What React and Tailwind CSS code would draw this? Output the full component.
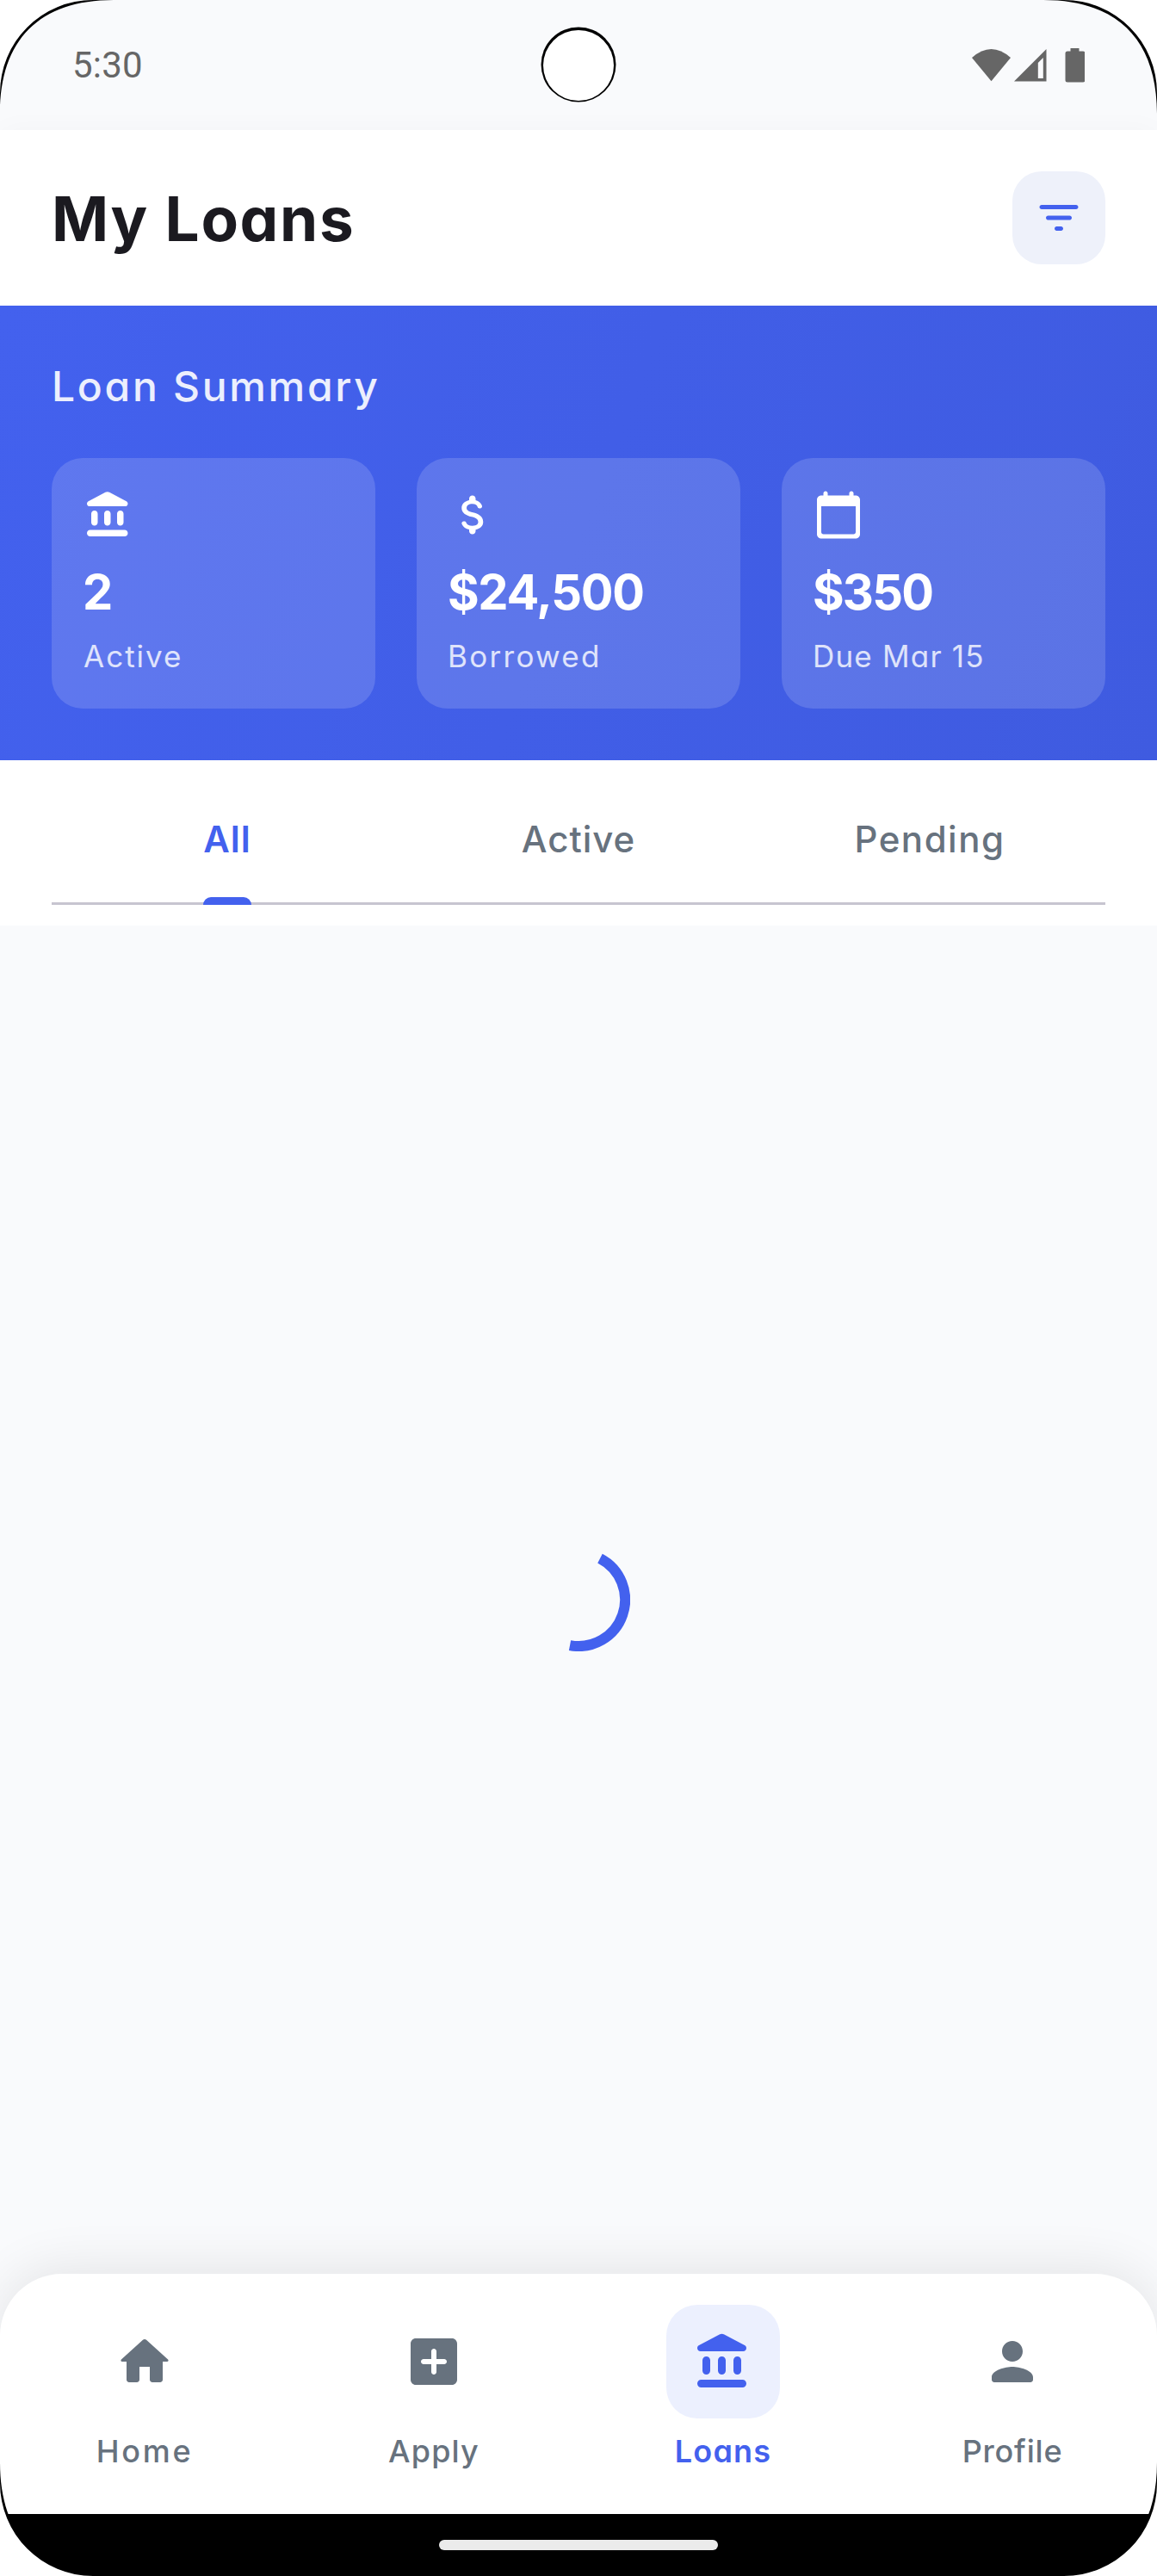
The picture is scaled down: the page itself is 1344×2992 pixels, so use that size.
import React from "react";

const PATHS = {
  bank: "M4 11.5v4c0 .83.67 1.5 1.5 1.5S7 16.33 7 15.5v-4c0-.83-.67-1.5-1.5-1.5S4 10.67 4 11.5zm6 0v4c0 .83.67 1.5 1.5 1.5s1.5-.67 1.5-1.5v-4c0-.83-.67-1.5-1.5-1.5s-1.5.67-1.5 1.5zM3.5 22h16c.83 0 1.5-.67 1.5-1.5s-.67-1.5-1.5-1.5h-16c-.83 0-1.5.67-1.5 1.5S2.67 22 3.5 22zM16 11.5v4c0 .83.67 1.5 1.5 1.5s1.5-.67 1.5-1.5v-4c0-.83-.67-1.5-1.5-1.5s-1.5.67-1.5 1.5zM10.57 1.49l-7.9 4.16c-.41.21-.67.64-.67 1.1C2 7.44 2.56 8 3.25 8h16.51C20.44 8 21 7.44 21 6.75c0-.46-.26-.89-.67-1.1l-7.9-4.16c-.58-.31-1.28-.31-1.86 0z",
  dollar: "M11.8 10.9c-2.27-.59-3-1.2-3-2.15 0-1.09 1.01-1.85 2.7-1.85 1.42 0 2.13.54 2.39 1.4.12.4.45.7.87.7h.3c.66 0 1.13-.65.9-1.27-.42-1.18-1.4-2.16-2.96-2.54V4.5c0-.83-.67-1.5-1.5-1.5S10 3.67 10 4.5v.66c-1.94.42-3.5 1.68-3.5 3.61 0 2.31 1.91 3.46 4.7 4.13 2.5.6 3 1.48 3 2.41 0 .69-.49 1.79-2.7 1.79-1.65 0-2.5-.59-2.83-1.43-.15-.39-.49-.67-.9-.67h-.28c-.67 0-1.14.68-.89 1.3.57 1.39 1.9 2.21 3.4 2.53v.67c0 .83.67 1.5 1.5 1.5s1.5-.67 1.5-1.5v-.65c1.95-.37 3.5-1.5 3.5-3.55 0-2.84-2.43-3.81-4.7-4.4z",
  calendar: "M20 3h-1V2c0-.55-.45-1-1-1s-1 .45-1 1v1H7V2c0-.55-.45-1-1-1s-1 .45-1 1v1H4c-1.1 0-2 .9-2 2v16c0 1.1.9 2 2 2h16c1.1 0 2-.9 2-2V5c0-1.1-.9-2-2-2zm-1 18H5c-.55 0-1-.45-1-1V8h16v12c0 .55-.45 1-1 1z",
  filter: "M11 18h2c.55 0 1-.45 1-1s-.45-1-1-1h-2c-.55 0-1 .45-1 1s.45 1 1 1zM3 7c0 .55.45 1 1 1h16c.55 0 1-.45 1-1s-.45-1-1-1H4c-.55 0-1 .45-1 1zm4 6h10c.55 0 1-.45 1-1s-.45-1-1-1H7c-.55 0-1 .45-1 1s.45 1 1 1z",
  home: "M10 19v-5h4v5c0 .55.45 1 1 1h3c.55 0 1-.45 1-1v-7h1.7c.46 0 .68-.57.33-.87L12.67 3.6c-.38-.34-.96-.34-1.34 0l-8.36 7.53c-.34.3-.13.87.33.87H5v7c0 .55.45 1 1 1h3c.55 0 1-.45 1-1z",
  add: "M19 3H5c-1.1 0-2 .9-2 2v14c0 1.1.9 2 2 2h14c1.1 0 2-.9 2-2V5c0-1.1-.9-2-2-2zm-3 10h-3v3c0 .55-.45 1-1 1s-1-.45-1-1v-3H8c-.55 0-1-.45-1-1s.45-1 1-1h3V8c0-.55.45-1 1-1s1 .45 1 1v3h3c.55 0 1 .45 1 1s-.45 1-1 1z",
  person: "M12 12c2.21 0 4-1.79 4-4s-1.79-4-4-4-4 1.79-4 4 1.79 4 4 4zm0 2c-2.67 0-8 1.34-8 4v1c0 .55.45 1 1 1h14c.55 0 1-.45 1-1v-1c0-2.66-5.33-4-8-4z",
};

function Icon({ name, className }) {
  return (
    <svg viewBox="0 0 24 24" fill="currentColor" className={className} aria-hidden="true">
      <path d={PATHS[name]} />
    </svg>
  );
}

/* Rounded display corner with its thin black bezel line. */
function Corner({ className }) {
  return (
    <svg viewBox="0 0 132 132" className={`pointer-events-none absolute z-20 size-[132px] ${className}`} aria-hidden="true">
      <path d="M0 0V132C0 46 46 0 132 0Z" fill="#000" />
      <path d="M0 0V108A108 108 0 0 1 108 0Z" fill="#fff" />
    </svg>
  );
}

function StatusBar() {
  return (
    <div className="relative flex h-[151px] shrink-0 items-center justify-between px-[84px] text-[#666666]">
      <span className="font-[Roboto] text-[42px] leading-none tracking-[0.2px]">5:30</span>
      <svg viewBox="0 0 132 40" className="h-10 w-[132px]" fill="currentColor" aria-hidden="true">
        <path d="M23.5 38.3L1 11Q23.5-9 46 11Z" />
        <path fillRule="evenodd" d="M50 38.5L87.5 1V38.5ZM77.8 35H83.8V11L77.8 17Z" />
        <path d="M115.5 0h10v3.5h4.500a2.500 2.500 0 0 1 2.500 2.500v31a2.500 2.500 0 0 1-2.500 2.500h-18a2.500 2.500 0 0 1-2.500-2.500v-31a2.500 2.500 0 0 1 2.500-2.500h3.500z" />
      </svg>
      <svg viewBox="0 0 90 90" className="absolute top-[30px] left-[627px] size-[90px]" aria-hidden="true">
        <circle cx="45" cy="45" r="43.5" fill="#000" />
        <circle cx="45" cy="46" r="41" fill="#fff" />
      </svg>
    </div>
  );
}

const STATS = [
  { icon: "bank", value: "2", label: "Active", valueCls: "", labelCls: "pl-px tracking-[2px]" },
  { icon: "dollar", value: "$24,500", label: "Borrowed", valueCls: "tracking-[-1.3px]", labelCls: "tracking-[2.3px]" },
  { icon: "calendar", value: "$350", label: "Due Mar 15", valueCls: "tracking-[-1.8px]", labelCls: "tracking-[1.2px]" },
];

const TABS = [
  { label: "All", cls: "font-semibold tracking-[1px] text-[#4361ee]", active: true },
  { label: "Active", cls: "font-medium tracking-[1px] text-[#67727e]" },
  { label: "Pending", cls: "font-medium tracking-[1.5px] text-[#67727e]" },
];

const NAV = [
  { icon: "home", label: "Home", cls: "font-medium tracking-[2.7px] text-[#67727e]" },
  { icon: "add", label: "Apply", cls: "font-medium tracking-[1.2px] text-[#67727e]" },
  { icon: "bank", label: "Loans", cls: "font-semibold tracking-[1.2px] text-[#4361ee]", active: true },
  { icon: "person", label: "Profile", cls: "font-medium tracking-[0.8px] text-[#67727e]" },
];

export default function App() {
  return (
    <div className="relative flex h-[2992px] w-[1344px] flex-col overflow-hidden bg-[#f9fafc] font-[Inter,sans-serif] [font-feature-settings:'cv11']">
      <StatusBar />

      <header className="flex h-[204px] shrink-0 items-center justify-between bg-white px-[60px] shadow-[0_6px_36px_rgba(0,0,0,0.04)]">
        <h1 className="pt-[2px] text-[71px] leading-none font-bold tracking-[1.7px] text-[#1b1a20]">My Loans</h1>
        <button className="flex size-[108px] items-center justify-center rounded-[34px] bg-[#eef1fa] text-[#4361ee]">
          <Icon name="filter" className="size-[60px]" />
        </button>
      </header>

      <section className="relative h-[528px] shrink-0 bg-[linear-gradient(111.45deg,#4361ee,#3f5be0)] px-[60px] pt-[60px] text-white">
        <h2 className="flex h-[69px] items-center pb-0.5 text-[48px] leading-none font-medium tracking-[2.7px] text-white/90">Loan Summary</h2>
        <div className="mt-12 grid grid-cols-3 gap-12">
          {STATS.map((s) => (
            <div key={s.label} className="flex h-[291px] flex-col rounded-[36px] bg-white/15 px-9 pt-9">
              <Icon name={s.icon} className="size-[60px]" />
              <div className={`mt-8 text-[56px] leading-none font-bold ${s.valueCls}`}>{s.value}</div>
              <div className={`mt-[29px] text-[35px] leading-none text-white/80 ${s.labelCls}`}>{s.label}</div>
            </div>
          ))}
        </div>
      </section>

      <nav className="relative h-[192px] shrink-0 bg-white px-[60px]">
        <div className="grid h-[168px] grid-cols-3 border-b-[3px] border-[#c7c5d0]">
          {TABS.map((t) => (
            <div key={t.label} className={`flex justify-center text-[42px] leading-none ${t.cls}`}>
              <div className="relative flex h-[168px] items-center pt-4">
                {t.label}
                {t.active && <span className="absolute inset-x-0 bottom-0 h-[9px] rounded-t-[9px] bg-[#4361ee]" />}
              </div>
            </div>
          ))}
        </div>
      </nav>

      <main className="flex flex-1 items-center justify-center">
        <svg viewBox="-60 -60 120 120" className="size-[120px]" fill="none" aria-label="Loading">
          <path d="M25-47.900A54 54 0 0 1-10 53.070" stroke="#4361ee" strokeWidth="12" />
        </svg>
      </main>

      <footer className="grid h-[279px] shrink-0 grid-cols-4 rounded-t-[72px] bg-white pt-9 shadow-[0_-6px_60px_rgba(0,0,0,0.09)]">
        {NAV.map((n) => (
          <div key={n.label} className={`flex flex-col items-center text-[36px] leading-none ${n.cls}`}>
            <div className={`flex size-[132px] items-center justify-center rounded-[36px] ${n.active ? "bg-[#ecf0fe]" : ""}`}>
              <Icon name={n.icon} className="size-[72px]" />
            </div>
            <span className="mt-5">{n.label}</span>
          </div>
        ))}
      </footer>

      <div className="flex h-[72px] shrink-0 items-center justify-center bg-black">
        <div className="h-3 w-[324px] rounded-full bg-[#ebebeb]" />
      </div>

      <Corner className="top-0 left-0" />
      <Corner className="top-0 right-0 rotate-90" />
      <Corner className="right-0 bottom-0 rotate-180" />
      <Corner className="bottom-0 left-0 -rotate-90" />
    </div>
  );
}
